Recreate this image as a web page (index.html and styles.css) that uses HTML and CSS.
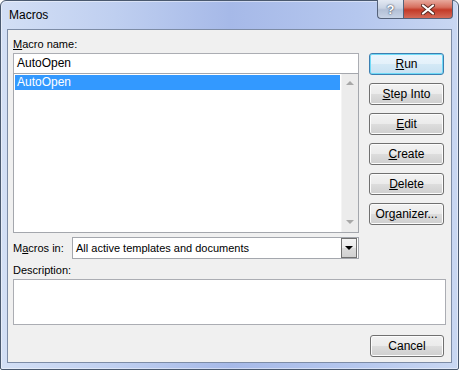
FILE: index.html
```html
<!DOCTYPE html>
<html>
<head>
    <title>Macros</title>
    <link rel="stylesheet" href="styles.css">
</head>
<body>
    <div class="window">
        <div class="titlebar">
            <span class="title">Macros</span>
            <div class="caption-buttons">
                <span class="cap-btn help">?</span>
                <span class="cap-btn close">
                    <svg width="14" height="11" viewBox="0 0 14 11">
                        <path d="M2 1.5 L12 9.5 M12 1.5 L2 9.5" stroke="#5a2a22" stroke-width="4" stroke-linecap="round"/>
                        <path d="M2 1.5 L12 9.5 M12 1.5 L2 9.5" stroke="#fff" stroke-width="2.2" stroke-linecap="round"/>
                    </svg>
                </span>
            </div>
        </div>

        <div class="client">
            <div class="main">
                <div class="left">
                    <div class="lbl"><u>M</u>acro name:</div>
                    <div class="name-input">AutoOpen</div>
                    <div class="listbox">
                        <div class="list-items">
                            <div class="item selected">AutoOpen</div>
                        </div>
                        <div class="vscroll">
                            <span class="arrow up"></span>
                            <span class="arrow down"></span>
                        </div>
                    </div>
                    <div class="macros-in">
                        <div class="lbl">M<u>a</u>cros in:</div>
                        <div class="combo">
                            <span class="combo-text">All active templates and documents</span>
                            <span class="combo-btn"><span class="tri"></span></span>
                        </div>
                    </div>
                </div>

                <div class="buttons">
                    <div class="btn default"><u>R</u>un</div>
                    <div class="btn"><u>S</u>tep Into</div>
                    <div class="btn"><u>E</u>dit</div>
                    <div class="btn"><u>C</u>reate</div>
                    <div class="btn"><u>D</u>elete</div>
                    <div class="btn">Or<u>g</u>anizer...</div>
                </div>
            </div>

            <div class="lbl desc-lbl">Description:</div>
            <div class="desc"></div>

            <div class="footer">
                <div class="btn cancel">Cancel</div>
            </div>
        </div>
    </div>
</body>
</html>
```

FILE: styles.css
```css
body {
    margin: 0;
    padding: 0;
    background-color: #fff;
    font-family: "Liberation Sans", Arial, sans-serif;
    font-size: 11px;
    color: #000;
}

.window {
    width: 459px;
    height: 370px;
    box-sizing: border-box;
    border: 1px solid #4a596f;
    border-radius: 6px 6px 2px 2px;
    padding: 0 6px 6px 6px;
    background: linear-gradient(to right, #d3dff5 0%, #bfcff0 25%, #a6b9e8 50%, #b5c7ee 78%, #c9d7f2 100%);
    box-shadow: inset 0 0 0 1px rgba(255, 255, 255, 0.45);
    display: flex;
    flex-direction: column;
}

.titlebar {
    height: 28px;
    display: flex;
    justify-content: space-between;
    align-items: flex-start;
}

.title {
    font-size: 12px;
    line-height: 28px;
    padding-left: 2px;
    color: #000;
}

.caption-buttons {
    display: flex;
    margin-right: -1px;
    margin-top: -1px;
}

.cap-btn {
    height: 19px;
    box-sizing: border-box;
    border: 1px solid #55627a;
    border-top: none;
    display: flex;
    align-items: center;
    justify-content: center;
}

.help {
    width: 26px;
    border-right: none;
    border-radius: 0 0 0 4px;
    background: linear-gradient(#e3e9f3 0%, #c9d3e3 45%, #b3c0d6 55%, #c7d3e6 100%);
    color: #fff;
    font-size: 13px;
    font-weight: bold;
    text-shadow: 0 0 2px #3d4a60, 0 0 1px #3d4a60;
}

.close {
    width: 50px;
    border-radius: 0 0 4px 0;
    background: linear-gradient(#e8a99d 0%, #d7705f 40%, #c33a28 55%, #d46a58 100%);
}

.client {
    flex: 1;
    background-color: #f0f0f0;
    border: 1px solid #7d8ca6;
    padding: 7px 5px 0 5px;
}

.main {
    display: flex;
    gap: 10px;
}

.left {
    width: 346px;
    display: flex;
    flex-direction: column;
}

.lbl {
    line-height: 15px;
    margin-bottom: 1px;
}

.name-input {
    height: 21px;
    box-sizing: border-box;
    border: 1px solid #abadb3;
    background-color: #fff;
    padding: 0 3px;
    line-height: 19px;
    font-size: 12px;
}

.listbox {
    margin-top: -1px;
    height: 160px;
    box-sizing: border-box;
    border: 1px solid #a4a7ad;
    background-color: #fff;
    display: flex;
}

.list-items {
    flex: 1;
    padding: 1px;
}

.item {
    line-height: 15px;
    padding-left: 2px;
    font-size: 12px;
}

.item.selected {
    background-color: #3399ff;
    color: #fff;
}

.vscroll {
    width: 16px;
    background-color: #ececec;
    border-left: 1px solid #f4f4f4;
    display: flex;
    flex-direction: column;
    justify-content: space-between;
    align-items: center;
    padding: 7px 0 8px 0;
}

.arrow {
    width: 0;
    height: 0;
    border-left: 4px solid transparent;
    border-right: 4px solid transparent;
}

.arrow.up {
    border-bottom: 4px solid #a8a8a8;
}

.arrow.down {
    border-top: 4px solid #a8a8a8;
}

.macros-in {
    display: flex;
    align-items: center;
    justify-content: space-between;
    margin-top: 4px;
}

.macros-in .lbl {
    margin-bottom: 0;
}

.combo {
    width: 287px;
    height: 22px;
    box-sizing: border-box;
    border: 1px solid #a4a7ad;
    background-color: #fff;
    display: flex;
    align-items: stretch;
    justify-content: space-between;
}

.combo-text {
    padding-left: 3px;
    line-height: 20px;
}

.combo-btn {
    width: 16px;
    margin-right: 1px;
    box-sizing: border-box;
    border: 1px solid #707070;
    background: linear-gradient(#f4f4f4 0%, #ebebeb 50%, #dcdcdc 50%, #d0d0d0 100%);
    display: flex;
    align-items: center;
    justify-content: center;
}

.tri {
    width: 0;
    height: 0;
    border-left: 4px solid transparent;
    border-right: 4px solid transparent;
    border-top: 4px solid #000;
}

.buttons {
    width: 75px;
    padding-top: 16px;
    display: flex;
    flex-direction: column;
    gap: 8px;
}

.btn {
    height: 22px;
    box-sizing: border-box;
    border: 1px solid #707070;
    border-radius: 3px;
    background: linear-gradient(#f2f2f2 0%, #ebebeb 50%, #dddddd 50%, #cfcfcf 100%);
    box-shadow: inset 0 0 0 1px #fcfcfc;
    text-align: center;
    line-height: 20px;
    font-size: 12px;
}

.btn.default {
    border-color: #3c7fb1;
    box-shadow: inset 0 0 0 1px #6fdaf7;
    background: linear-gradient(#eaf6fd 0%, #e4f1fa 50%, #d4e9f6 50%, #c8e1f2 100%);
}

.desc-lbl {
    margin-top: 4px;
}

.desc {
    width: 433px;
    height: 46px;
    box-sizing: border-box;
    border: 1px solid #abadb3;
    background-color: #fff;
}

.footer {
    display: flex;
    justify-content: flex-end;
    margin-top: 10px;
    padding-right: 2px;
}

.btn.cancel {
    width: 74px;
}
```
